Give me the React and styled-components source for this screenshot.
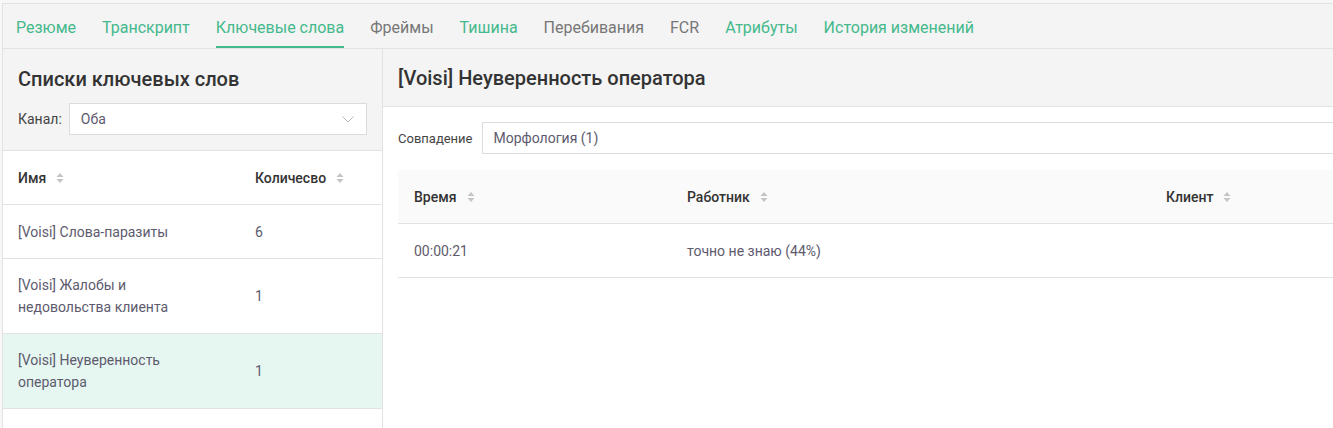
import React from "react";
import styled, { createGlobalStyle } from "styled-components";

const GlobalStyle = createGlobalStyle`
  html, body {
    margin: 0;
    padding: 0;
    background: #f7f7f7;
    overflow: hidden;
  }
  body {
    font-family: Roboto, "Noto Sans", "Liberation Sans", sans-serif;
    color: #595959;
  }
`;

const Page = styled.div`
  margin: 3px 0 0 2px;
  width: 1420px;
  border-top: 1px solid #e2e2e2;
  border-left: 1px solid #e2e2e2;
  background: #fff;
  height: 430px;
`;

const TabBar = styled.nav`
  display: flex;
  height: 44px;
  background: #f4f4f4;
  border-bottom: 1px solid #e2e2e2;
`;

const Tab = styled.div`
  display: flex;
  align-items: center;
  margin-left: ${(p) => (p.$first ? "13px" : "26px")};
  height: 44px;
  box-sizing: border-box;
  font-size: 16px;
  color: ${(p) => (p.$muted ? "#777777" : "#44b98c")};
  border-bottom: 2px solid ${(p) => (p.$active ? "#44b98c" : "transparent")};
  padding-top: 4px;
`;

const Body = styled.div`
  display: flex;
`;

const LeftPanel = styled.aside`
  width: 379px;
  flex-shrink: 0;
  border-right: 1px solid #e2e2e2;
  background: #fff;
  height: 400px;
`;

const LeftHead = styled.div`
  background: #f4f4f4;
  height: 101px;
  border-bottom: 1px solid #e2e2e2;
  padding: 0 15px;
`;

const PanelTitle = styled.h2`
  margin: 0;
  font-size: 20px;
  font-weight: 500;
  color: #333;
  padding-top: ${(p) => p.$top || "18px"};
  line-height: 24px;
`;

const ChannelRow = styled.div`
  display: flex;
  align-items: center;
  margin-top: 12px;
  gap: 7px;
`;

const Label = styled.span`
  font-size: ${(p) => p.$size || "14px"};
  color: #444;
`;

const Select = styled.div`
  flex: 1;
  height: 32px;
  box-sizing: border-box;
  background: #fff;
  border: 1px solid #dcdcdc;
  display: flex;
  align-items: center;
  justify-content: space-between;
  padding: 0 12px 0 11px;
  font-size: 14px;
  color: #5d5a6e;
`;

const Table = styled.div`
  display: grid;
  grid-template-columns: ${(p) => p.$cols};
`;

const HeadCell = styled.div`
  height: 53px;
  display: flex;
  align-items: center;
  padding-left: ${(p) => p.$pl || "16px"};
  font-size: 14px;
  font-weight: 500;
  color: #333;
  background: ${(p) => p.$bg || "#fff"};
  border-bottom: 1px solid #e2e2e2;
  gap: 10px;
`;

const Cell = styled.div`
  min-height: ${(p) => p.$h || "53px"};
  display: flex;
  align-items: center;
  padding-left: ${(p) => p.$pl || "16px"};
  padding-right: ${(p) => p.$pr || "10px"};
  font-size: 14px;
  line-height: 22px;
  color: #5d5a6e;
  background: ${(p) => (p.$selected ? "#e6f6f0" : "#fff")};
  border-bottom: 1px solid #e2e2e2;
`;

const RightPanel = styled.main`
  flex: 1;
  background: #fff;
`;

const RightHead = styled.div`
  background: #f4f4f4;
  height: 57px;
  border-bottom: 1px solid #e2e2e2;
  padding-left: 15px;
`;

const MatchRow = styled.div`
  display: flex;
  align-items: center;
  padding: 15px 0 0 15px;
  gap: 9px;
`;

const Input = styled.div`
  flex: 1;
  height: 32px;
  box-sizing: border-box;
  border: 1px solid #dcdcdc;
  display: flex;
  align-items: center;
  padding-left: 11px;
  font-size: 14px;
  color: #5d5a6e;
`;

const RightTable = styled.div`
  margin: 16px 0 0 15px;
`;

const SortIcon = () => (
  <svg width="8" height="12" viewBox="0 0 8 12">
    <path d="M4 1 L7.5 5 H0.5 Z" fill="#c4c4c4" />
    <path d="M4 11 L7.5 7 H0.5 Z" fill="#c4c4c4" />
  </svg>
);

const Chevron = () => (
  <svg width="12" height="7" viewBox="0 0 12 7">
    <path d="M0.5 0.5 L6 6 L11.5 0.5" fill="none" stroke="#bbb" strokeWidth="1" />
  </svg>
);

const tabs = [
  { label: "Резюме" },
  { label: "Транскрипт" },
  { label: "Ключевые слова", active: true },
  { label: "Фреймы", muted: true },
  { label: "Тишина" },
  { label: "Перебивания", muted: true },
  { label: "FCR", muted: true },
  { label: "Атрибуты" },
  { label: "История изменений" },
];

const lists = [
  { name: "[Voisi] Слова-паразиты", count: 6, h: "53px" },
  { name: "[Voisi] Жалобы и недовольства клиента", count: 1, h: "74px" },
  { name: "[Voisi] Неуверенность оператора", count: 1, h: "74px", selected: true },
];

export default function App() {
  return (
    <>
      <GlobalStyle />
      <Page>
        <TabBar>
          {tabs.map((t, i) => (
            <Tab key={t.label} $first={i === 0} $active={t.active} $muted={t.muted}>
              {t.label}
            </Tab>
          ))}
        </TabBar>
        <Body>
          <LeftPanel>
            <LeftHead>
              <PanelTitle>Списки ключевых слов</PanelTitle>
              <ChannelRow>
                <Label>Канал:</Label>
                <Select>
                  <span>Оба</span>
                  <Chevron />
                </Select>
              </ChannelRow>
            </LeftHead>
            <Table $cols="236px 1fr">
              <HeadCell $pl="15px">
                Имя <SortIcon />
              </HeadCell>
              <HeadCell>
                Количесво <SortIcon />
              </HeadCell>
              {lists.map((r) => (
                <React.Fragment key={r.name}>
                  <Cell $h={r.h} $selected={r.selected} $pl="15px" $pr="48px">
                    {r.name}
                  </Cell>
                  <Cell $h={r.h} $selected={r.selected}>
                    {r.count}
                  </Cell>
                </React.Fragment>
              ))}
            </Table>
          </LeftPanel>
          <RightPanel>
            <RightHead>
              <PanelTitle $top="17px">[Voisi] Неуверенность оператора</PanelTitle>
            </RightHead>
            <MatchRow>
              <Label $size="13px">Совпадение</Label>
              <Input>Морфология (1)</Input>
            </MatchRow>
            <RightTable>
              <Table $cols="273px 479px 1fr">
                <HeadCell $bg="#fafafa">
                  Время <SortIcon />
                </HeadCell>
                <HeadCell $bg="#fafafa">
                  Работник <SortIcon />
                </HeadCell>
                <HeadCell $bg="#fafafa">
                  Клиент <SortIcon />
                </HeadCell>
                <Cell>00:00:21</Cell>
                <Cell>точно не знаю (44%)</Cell>
                <Cell />
              </Table>
            </RightTable>
          </RightPanel>
        </Body>
      </Page>
    </>
  );
}
